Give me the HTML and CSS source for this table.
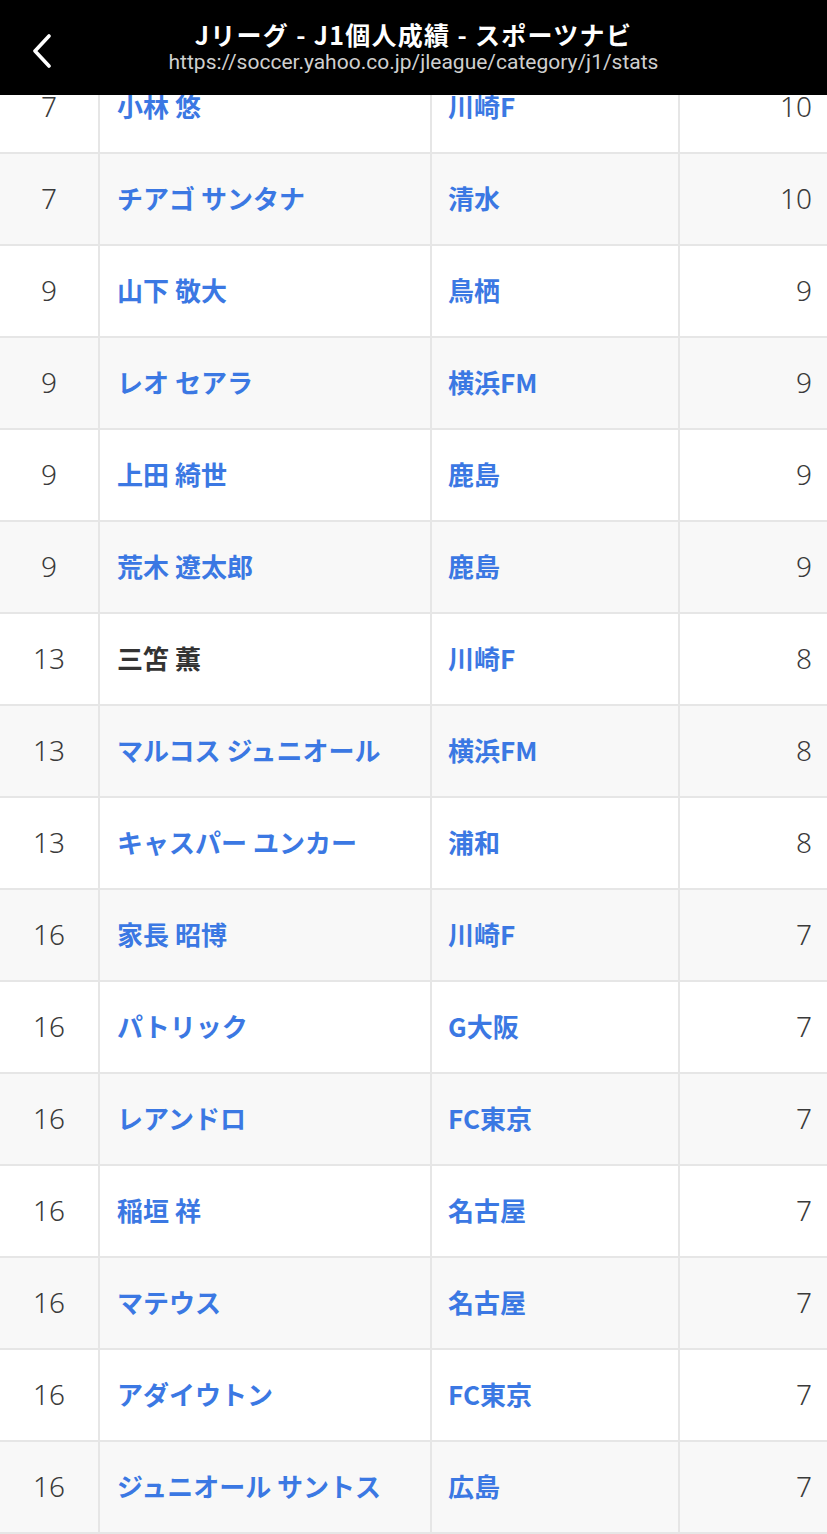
FILE: index.html
```html
<!DOCTYPE html>
<html lang="ja">
<head>
<meta charset="utf-8">
<title>Jリーグ - J1個人成績 - スポーツナビ</title>
<link rel="stylesheet" href="styles.css">
</head>
<body>
<header class="topbar">
  <svg class="back" viewBox="0 0 24 34" width="24" height="34" aria-hidden="true">
    <polyline points="19,2 5,17 19,32" fill="none" stroke="#fff" stroke-width="3.6" stroke-linecap="round" stroke-linejoin="round"/>
  </svg>
  <div class="titles">
    <div class="title">Jリーグ - J1個人成績 - スポーツナビ</div>
    <div class="url">https://soccer.yahoo.co.jp/jleague/category/j1/stats</div>
  </div>
</header>
<main class="table">
  <div class="row"><div class="rank">7</div><div class="name"><a>小林 悠</a></div><div class="team"><a>川崎F</a></div><div class="goals">10</div></div>
  <div class="row alt"><div class="rank">7</div><div class="name"><a>チアゴ サンタナ</a></div><div class="team"><a>清水</a></div><div class="goals">10</div></div>
  <div class="row"><div class="rank">9</div><div class="name"><a>山下 敬大</a></div><div class="team"><a>鳥栖</a></div><div class="goals">9</div></div>
  <div class="row alt"><div class="rank">9</div><div class="name"><a>レオ セアラ</a></div><div class="team"><a>横浜FM</a></div><div class="goals">9</div></div>
  <div class="row"><div class="rank">9</div><div class="name"><a>上田 綺世</a></div><div class="team"><a>鹿島</a></div><div class="goals">9</div></div>
  <div class="row alt"><div class="rank">9</div><div class="name"><a>荒木 遼太郎</a></div><div class="team"><a>鹿島</a></div><div class="goals">9</div></div>
  <div class="row"><div class="rank">13</div><div class="name"><span class="plain">三笘 薫</span></div><div class="team"><a>川崎F</a></div><div class="goals">8</div></div>
  <div class="row alt"><div class="rank">13</div><div class="name"><a>マルコス ジュニオール</a></div><div class="team"><a>横浜FM</a></div><div class="goals">8</div></div>
  <div class="row"><div class="rank">13</div><div class="name"><a>キャスパー ユンカー</a></div><div class="team"><a>浦和</a></div><div class="goals">8</div></div>
  <div class="row alt"><div class="rank">16</div><div class="name"><a>家長 昭博</a></div><div class="team"><a>川崎F</a></div><div class="goals">7</div></div>
  <div class="row"><div class="rank">16</div><div class="name"><a>パトリック</a></div><div class="team"><a>G大阪</a></div><div class="goals">7</div></div>
  <div class="row alt"><div class="rank">16</div><div class="name"><a>レアンドロ</a></div><div class="team"><a>FC東京</a></div><div class="goals">7</div></div>
  <div class="row"><div class="rank">16</div><div class="name"><a>稲垣 祥</a></div><div class="team"><a>名古屋</a></div><div class="goals">7</div></div>
  <div class="row alt"><div class="rank">16</div><div class="name"><a>マテウス</a></div><div class="team"><a>名古屋</a></div><div class="goals">7</div></div>
  <div class="row"><div class="rank">16</div><div class="name"><a>アダイウトン</a></div><div class="team"><a>FC東京</a></div><div class="goals">7</div></div>
  <div class="row alt"><div class="rank">16</div><div class="name"><a>ジュニオール サントス</a></div><div class="team"><a>広島</a></div><div class="goals">7</div></div>
</main>
</body>
</html>
```
FILE: styles.css
```css
* { box-sizing: border-box; }
html, body { margin: 0; padding: 0; background: #fff; }
body {
  font-family: "Noto Sans CJK JP", "Noto Sans", sans-serif;
  padding-top: 60px;
}
.topbar {
  position: fixed;
  top: 0; left: 0; right: 0;
  height: 95px;
  background: #000;
  display: flex;
  align-items: center;
  justify-content: center;
  z-index: 10;
}
.back {
  position: absolute;
  left: 30px;
  top: 34px;
}
.titles {
  display: flex;
  flex-direction: column;
  align-items: center;
  margin-top: -1px;
}
.title {
  color: #fff;
  font-weight: 700;
  font-size: 25px;
  line-height: 30px;
  letter-spacing: 1.3px;
}
.url {
  color: #cfcfcf;
  font-family: "Roboto", "Noto Sans", sans-serif;
  font-size: 21px;
  line-height: 27px;
}
.table {
  border-bottom: 2px solid #e6e6e6;
}
.row {
  display: grid;
  grid-template-columns: 98px 332px 248px 1fr;
  height: 92px;
  border-top: 2px solid #e6e6e6;
  background: #fff;
}
.row.alt { background: #f8f8f8; }
.row > div {
  display: flex;
  align-items: center;
  padding-bottom: 3px;
}
.name, .team, .goals { border-left: 2px solid #e6e6e6; }
.rank {
  justify-content: center;
  color: #3a3a3a;
  font-family: "Noto Sans", sans-serif;
  font-weight: 300;
  font-size: 28px;
}
.name { padding-left: 17px; }
.team { padding-left: 16px; }
.goals {
  justify-content: flex-end;
  padding-right: 15px;
  color: #3a3a3a;
  font-family: "Noto Sans", sans-serif;
  font-weight: 300;
  font-size: 28px;
}
.name a, .team a, .plain {
  font-weight: 700;
  font-size: 26px;
  line-height: 1;
  white-space: nowrap;
}
.name a, .team a {
  color: #3b78e3;
  text-decoration: none;
}
.plain { color: #333; }
```
